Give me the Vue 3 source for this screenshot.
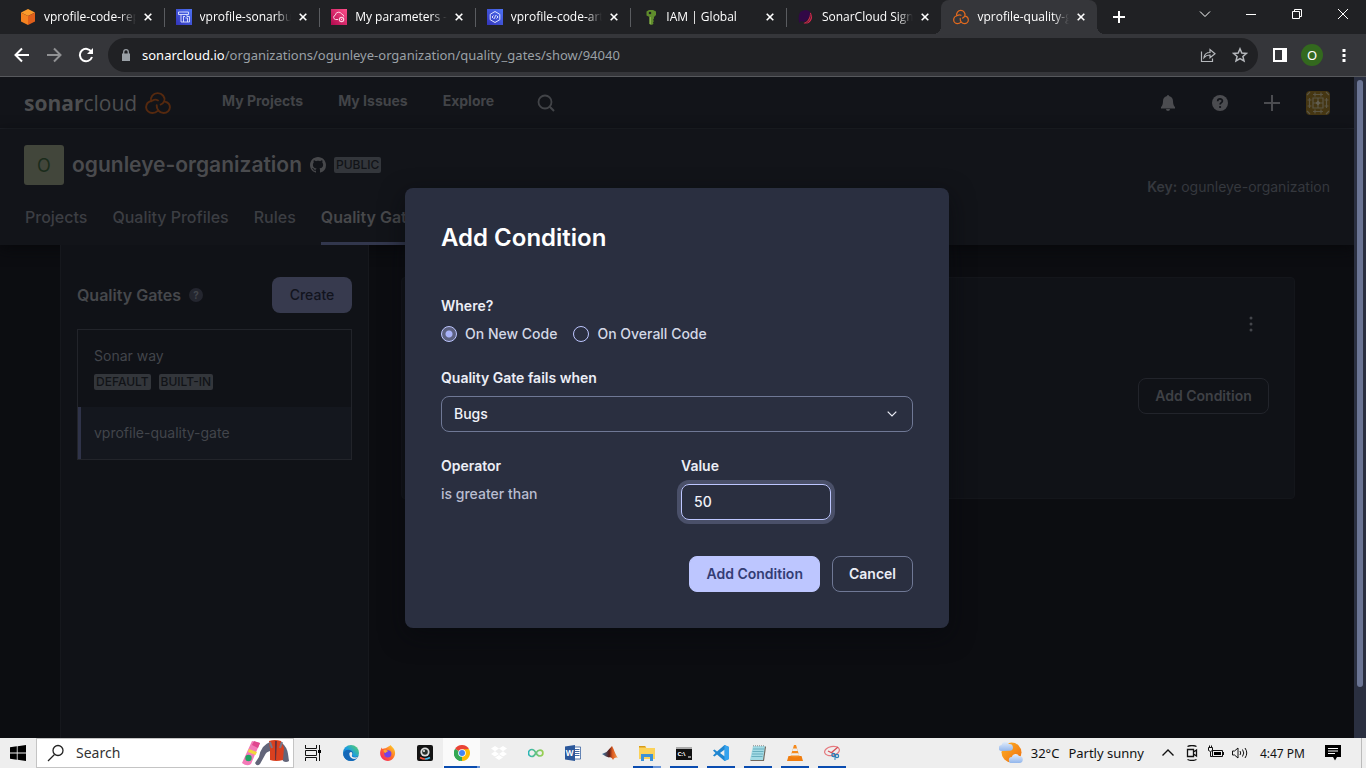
<script setup>
import { ref } from 'vue'

const tabs = [
  { title: 'vprofile-code-repo', icon: 'cube' },
  { title: 'vprofile-sonarbuild', icon: 'build' },
  { title: 'My parameters - AWS', icon: 'params' },
  { title: 'vprofile-code-artifact', icon: 'hexcode' },
  { title: 'IAM | Global', icon: 'key' },
  { title: 'SonarCloud Sign up', icon: 'planet' },
  { title: 'vprofile-quality-gate', icon: 'sonar', active: true }
]

const apps = [
  { name: 'Edge', icon: 'edge' },
  { name: 'Firefox', icon: 'firefox' },
  { name: 'Camera', icon: 'camera' },
  { name: 'Chrome', icon: 'chrome', open: true, current: true },
  { name: 'Dropbox', icon: 'dropbox' },
  { name: 'Loop', icon: 'loop' },
  { name: 'Word', icon: 'word', glyph: 'W' },
  { name: 'Matlab', icon: 'matlab' },
  { name: 'Explorer', icon: 'folder', open: true, stacked: true },
  { name: 'Command Prompt', icon: 'cmd', glyph: 'C:\\', open: true },
  { name: 'Code', icon: 'code', open: true },
  { name: 'Notepad', icon: 'notepad', open: true },
  { name: 'VLC', icon: 'vlc', open: true },
  { name: 'Snip', icon: 'snip', open: true }
]

const scope = ref('new')
const metric = ref('Bugs')
const value = ref('50')
</script>

<template>
  <div class="screen">
    <svg class="sprite" aria-hidden="true">
      <defs>
        <linearGradient id="gBlue" x1="0" y1="1" x2="1" y2="0"><stop offset="0" stop-color="#3334b9" /><stop offset="1" stop-color="#4d72f3" /></linearGradient>
        <linearGradient id="gPink" x1="0" y1="1" x2="1" y2="0"><stop offset="0" stop-color="#b0084d" /><stop offset="1" stop-color="#ff4f8b" /></linearGradient>
        <linearGradient id="gEdge" x1="0" y1="1" x2="1" y2="0"><stop offset="0" stop-color="#0c59a4" /><stop offset=".5" stop-color="#1b9de2" /><stop offset="1" stop-color="#5fd65c" /></linearGradient>
        <linearGradient id="gFox" x1="0" y1="1" x2="1" y2="0"><stop offset="0" stop-color="#f5156c" /><stop offset=".5" stop-color="#ff6a2b" /><stop offset="1" stop-color="#ffe226" /></linearGradient>
        <linearGradient id="gLoop" x1="0" y1="0" x2="1" y2="0"><stop offset="0" stop-color="#2ab5b5" /><stop offset="1" stop-color="#9bcf50" /></linearGradient>
        <linearGradient id="gMat" x1="0" y1="0" x2="1" y2="0"><stop offset="0" stop-color="#3a80b0" /><stop offset=".45" stop-color="#5b1d18" /><stop offset=".65" stop-color="#dc5a20" /><stop offset="1" stop-color="#f0a050" /></linearGradient>
        <linearGradient id="gSun" x1="0" y1="0" x2="1" y2="1"><stop offset="0" stop-color="#ffb224" /><stop offset="1" stop-color="#ee6d10" /></linearGradient>
        <linearGradient id="gCloud" x1="0" y1="0" x2="0" y2="1"><stop offset="0" stop-color="#e2edfb" /><stop offset="1" stop-color="#92b6ec" /></linearGradient>
      </defs>
      <symbol id="cube" viewBox="0 0 16 16"><path d="M8 0l7 3.400L8 7 1 3.400z" fill="#fb9b2c" /><path d="M1 3.400L8 7v9l-7-3.600z" fill="#f58220" /><path d="M15 3.400L8 7v9l7-3.600z" fill="#e05f1b" /></symbol>
      <symbol id="build" viewBox="0 0 16 16"><path d="M0 0h16v16H0z" fill="url(#gBlue)" /><path d="M2.500 3h10v2.500h-10zM5 5.500V13h8.500V7.500H11V5.500M7 7.500h2M7.500 8v5M9.500 9h2v4" fill="none" stroke="#dfe4ff" stroke-width=".9" /></symbol>
      <symbol id="params" viewBox="0 0 16 16"><path d="M0 0h16v16H0z" fill="url(#gPink)" /><path d="M7 10.500H4.500a2.200 2.200 0 0 1-.2-4.300 3.400 3.400 0 0 1 6.500-1 2.400 2.400 0 0 1 2 2.300" fill="none" stroke="#ffd0e2" stroke-width="1" /><circle cx="10.500" cy="10.500" r="2.200" fill="none" stroke="#ffd0e2" stroke-width="1.200" /><circle cx="10.500" cy="10.500" r=".7" fill="#ffd0e2" /></symbol>
      <symbol id="hexcode" viewBox="0 0 16 16"><path d="M0 0h16v16H0z" fill="url(#gBlue)" /><path d="M8 2.500l4.800 2.800v5.400L8 13.500l-4.800-2.800V5.300zM6.500 6.500L5 8l1.500 1.500M9.500 6.500L11 8 9.500 9.500M8.600 6.300l-1.200 3.400" fill="none" stroke="#dfe4ff" stroke-width="1" /></symbol>
      <symbol id="key" viewBox="0 0 16 16"><path d="M4.500 2.500L7 1h4l3 1.500V6l-2 2v1.500L11 11l1 1-1 1.200.5 1.300L10 16l-2.500-1V8L4.500 6.500z" fill="#5f8c2c" /><path d="M7.500 8V15L9 15.600V8z" fill="#87b04a" /><circle cx="8" cy="4" r="1.300" fill="#202124" /></symbol>
      <symbol id="planet" viewBox="0 0 16 16"><path d="M7 1a6.500 6.500 0 0 1 5 2c1 2-1 7-5 9.500a5 5 0 0 1-4-.5L1.500 14C0 11 .5 4 3 2.500z" fill="#310846" /><path d="M12 3.500c3.500 2.500 2.500 8-1.500 10.500-2 1-4 1-5 0 4-.8 6.800-5.500 6.500-10.500z" fill="#d9284f" /><path d="M13 5c.3 4-2 8-5.500 9.500" fill="none" stroke="#202124" stroke-width=".7" /></symbol>
      <symbol id="sonar" viewBox="0 0 24 24"><path d="M5.700 10.300A6.300 6.300 0 1 1 17.800 10.200C17 12 15.800 13.200 14.400 13.600M12 9.400C10.600 8.500 8.300 8.600 6.800 9.700 4 10.300 1 11.800 1 16.300A5.900 5.900 0 0 0 7 22c2 0 3.400-.7 4.400-1.800M10.800 14.200c-.2 4 2.400 7.800 6.400 7.800a5.800 5.800 0 0 0 5.800-5.700c0-3-2-5.100-4.700-5.700" fill="none" stroke="currentColor" stroke-width="1.800" stroke-linecap="round" /></symbol>
      <symbol id="edge" viewBox="0 0 16 16"><circle cx="8" cy="8" r="8" fill="url(#gEdge)" /><path d="M.3 9.500C1 5 5 4 8 5.500c2 1 2.500 3 1.300 4.500-.6 1 .7 2 3 2 1.500 0 2.500-.8 3.200-1.500C14.500 14 11 16 8 16 4 15.800 1 13.500.3 9.500z" fill="#1468b8" /><path d="M6.300 9C6.500 12.500 9 14.500 12.500 13.800c1.200-.4 2-1.200 2.800-2.300-1 .7-2 .9-3 .9-3 0-4-1-3.200-2.600.6-1.200 0-2.800-1.100-2.900C6.800 7 6.300 8 6.300 9z" fill="#eee" /></symbol>
      <symbol id="firefox" viewBox="0 0 16 16"><path d="M8.500 1.500C10 .8 10.500 0 10.500 0c1 1.500 2.500 2.500 3.500 4 3 5-.5 12-6 12C2 16-1 10.500.5 5.500c.3-1 1-2.500 1.300-3l.6 1.500c2-.8 4-.5 6.100-2.500z" fill="url(#gFox)" /><circle cx="7.800" cy="8.800" r="3.600" fill="#7542e5" /><path d="M3.500 5c2-.5 3.500 0 4.500 1.500-1.500 0-2 1-2 1.500C4.500 8 3.500 7 3.500 5z" fill="#ffa52b" /></symbol>
      <symbol id="camera" viewBox="0 0 16 16"><rect width="16" height="16" rx="2" fill="#131313" /><circle cx="8" cy="7" r="4.600" fill="#ddd" /><circle cx="8" cy="7" r="2.800" fill="#28312d" /><circle cx="7" cy="6" r="1" fill="#eee" /><path d="M3 12.500q2.500 1.500 5 1.500" stroke="#f0533c" stroke-width="1.500" fill="none" /><path d="M8 14q2.500 0 5-1.500" stroke="#45b8e8" stroke-width="1.500" fill="none" /></symbol>
      <symbol id="chrome" viewBox="0 0 16 16"><path d="M8 8L1.070 4A8 8 0 0 1 14.930 4z" fill="#ea4335" /><path d="M8 8l6.930-4A8 8 0 0 1 8 16z" fill="#fbbc05" /><path d="M8 8v8A8 8 0 0 1 1.070 4z" fill="#34a853" /><path d="M8 4.300h7L8 16l3.200-6z" fill="#fbbc05" /><path d="M1.100 4l3.700 6L8 12l-2 4A8 8 0 0 1 1.100 4z" fill="#34a853" /><circle cx="8" cy="8" r="3.800" fill="#fff" /><circle cx="8" cy="8" r="3" fill="#4285f4" /></symbol>
      <symbol id="dropbox" viewBox="0 0 16 16"><path d="M4 1l4 2.600L4 6.200 0 3.600zM12 1l4 2.600-4 2.600-4-2.600zM4 6.300l4 2.600-4 2.600L0 8.900zM12 6.300l4 2.600-4 2.600-4-2.600zM8 9.900l4 2.600L8 15l-4-2.500z" fill="#fff" /></symbol>
      <symbol id="loop" viewBox="0 0 16 16"><path d="M8 8C6.500 10.500 5.500 11.500 4 11.500a3.400 3.400 0 0 1 0-7C6 4.500 7 6 8 8s2 3 4 3a2.800 2.800 0 0 0 0-5.800C10 5.200 9 6.500 8 8z" fill="none" stroke="url(#gLoop)" stroke-width="1.700" /></symbol>
      <symbol id="word" viewBox="0 0 16 16"><path d="M9 2h6.600v12H9z" fill="#fff" stroke="#2b579a" stroke-width=".8" /><path d="M10 4.500h4.500M10 6.500h4.500M10 8.500h4.500M10 10.500h4.500" stroke="#2b579a" stroke-width=".9" /><path d="M0 1.500L10 0v16L0 14.500z" fill="#2b579a" /></symbol>
      <symbol id="matlab" viewBox="0 0 16 16"><path d="M0 9l4.500-2L10 1c1.500 2 3 8 6 12-2-.8-3.500-.5-5 2-1-2-2-3-4-2.500L4 11.500z" fill="url(#gMat)" /></symbol>
      <symbol id="folder" viewBox="0 0 16 16"><path d="M0 1h6l1.500 2H16v11H0z" fill="#fbd25a" /><path d="M0 1h6l1 1.500H0z" fill="#d89b18" /><path d="M2 16V9h12v7h-3v-4H5v4z" fill="#3c92d8" /></symbol>
      <symbol id="cmd" viewBox="0 0 16 16"><path d="M0 2h16v13H0z" fill="#111" /><path d="M0 2h16v2H0z" fill="#aaa" /><path d="M12 12h3" stroke="#fff" /></symbol>
      <symbol id="code" viewBox="0 0 16 16"><path d="M11.500 0L16 2v12l-4.500 2L4 9.500 1.500 11.500 0 10.500 2.500 8 0 5.500l1.500-1L4 6.500zM11.700 4.500L7 8l4.700 3.500z" fill="#1f86d0" fill-rule="evenodd" /><path d="M11.500 0L16 2v12l-4.500 2z" fill="#36a3ee" /></symbol>
      <symbol id="notepad" viewBox="0 0 16 16"><path d="M15 1l1 1-2 14H1l-1-1z" fill="#71695f" /><path d="M3 1h12l-2 14H0z" fill="#a3dbe5" /><path d="M3 4h11M2.500 6.500h11M2 9h11M1.500 11.500h11" stroke="#4f9caf" stroke-width=".7" /><path d="M3 .8h12" stroke="#888" stroke-dasharray="1 1" /></symbol>
      <symbol id="vlc" viewBox="0 0 16 16"><path d="M1.500 11h13L16 16H0z" fill="#f07d0f" /><path d="M7 0h2l3.500 11.500q-4.500 2-9 0z" fill="#f58a1d" /><path d="M6 3.500h4l.8 2.500H5.200zM4.500 8.200h7l.7 2.300H3.700z" fill="#eee" /></symbol>
      <symbol id="snip" viewBox="0 0 16 16"><ellipse cx="8" cy="6" rx="7.500" ry="4.500" fill="none" stroke="#e67a7f" stroke-width="1.200" transform="rotate(-12 8 6)" /><path d="M14 2L7 8M4 6l8 4" stroke="#d74e55" stroke-width="1.300" /><circle cx="9.500" cy="10" r="1.600" fill="none" stroke="#2c7fb8" stroke-width="1.300" /><circle cx="13" cy="11" r="1.600" fill="none" stroke="#2c7fb8" stroke-width="1.300" /><path d="M11 10v5" stroke="#2c7fb8" /></symbol>
    </svg>

    <header class="titlebar">
      <div class="tabs">
        <div v-for="t in tabs" :key="t.title" class="tab" :class="{ active: t.active }">
          <svg class="fav"><use :href="'#' + t.icon" /></svg>
          <span class="tab-title">{{ t.title }}</span>
          <button class="x" aria-label="Close tab"><svg viewBox="0 0 8 8"><path d="M.7.7l6.600 6.600M7.300.7L.7 7.300" /></svg></button>
        </div>
      </div>
      <button class="newtab" aria-label="New tab"><svg width="12" height="12" viewBox="0 0 12 12"><path d="M6 0v12M0 6h12" stroke="#fff" stroke-width="2" /></svg></button>
      <div class="winctl">
        <button aria-label="Search tabs"><svg width="12" height="12" viewBox="0 0 12 12"><path d="M1 3.500l5 5 5-5" /></svg></button>
        <button aria-label="Minimize"><svg width="12" height="12" viewBox="0 0 12 12"><path d="M1 6.500h10" /></svg></button>
        <button aria-label="Restore"><svg width="12" height="12" viewBox="0 0 12 12"><path d="M1.500 3.500h7v7h-7zM3.500 3.500v-2h7v7h-2" /></svg></button>
        <button aria-label="Close"><svg width="12" height="12" viewBox="0 0 12 12"><path d="M1 1l10 10M11 1L1 11" /></svg></button>
      </div>
    </header>

    <div class="toolbar">
      <button class="nav-btn" aria-label="Back"><svg width="16" height="16" viewBox="0 0 16 16"><path d="M15 8H2M8 1.500L1.500 8 8 14.500" /></svg></button>
      <button class="nav-btn off" aria-label="Forward"><svg width="16" height="16" viewBox="0 0 16 16"><path d="M1 8h13M8 1.500L14.500 8 8 14.500" /></svg></button>
      <button class="nav-btn" aria-label="Reload"><svg width="16" height="16" viewBox="0 0 16 16"><path d="M13.500 5A6.200 6.200 0 1 0 14 10" /><path d="M15 1v6H9z" fill="#fff" stroke="none" /></svg></button>
      <div class="omnibox">
        <svg width="10" height="12" viewBox="0 0 10 12"><path d="M1 4.500h8V12H1z" fill="#9aa0a6" /><path d="M2.700 5V3a2.300 2.300 0 0 1 4.600 0v2" fill="none" stroke="#9aa0a6" stroke-width="1.300" /></svg>
        <span class="url"><b>sonarcloud.io</b>/organizations/ogunleye-organization/quality_gates/show/94040</span>
        <button class="om" aria-label="Share"><svg width="16" height="16" viewBox="0 0 16 16"><path d="M1.500 4.500v10h11v-3M4 10.500C4.500 7 7 5.500 10 5.500V2.500l5 4.300-5 4V8C7 8 5.500 8.800 4 10.500z" /></svg></button>
        <button class="om" aria-label="Bookmark"><svg width="16" height="16" viewBox="0 0 16 16"><path d="M8 1.800l1.800 4.200 4.600.4-3.500 3 1.100 4.500L8 11.500l-4 2.400 1.100-4.500-3.500-3 4.600-.4z" stroke-width="1.500" /></svg></button>
      </div>
      <button class="ext" aria-label="Side panel"><svg width="14" height="14" viewBox="0 0 14 14"><path d="M0 0h14v14H0zM2 2v10h7V2z" fill="#fff" fill-rule="evenodd" /></svg></button>
      <button class="profile" aria-label="Profile">O</button>
      <button class="ext" aria-label="Menu"><svg width="4" height="14" viewBox="0 0 4 14"><path d="M.5 1h3v3h-3zM.5 6h3v3h-3zM.5 11h3v3h-3z" fill="#fff" /></svg></button>
    </div>

    <div class="view">
      <div class="page">
        <div class="topnav">
          <a class="logo" href="#"><span><b>sonar</b>cloud</span><svg width="26" height="24" viewBox="0 0 24 24" preserveAspectRatio="none"><use href="#sonar" /></svg></a>
          <nav class="main-links">
            <a href="#">My Projects</a>
            <a href="#">My Issues</a>
            <a href="#">Explore</a>
          </nav>
          <button class="find" aria-label="Search"><svg width="18" height="18" viewBox="0 0 18 18"><path d="M12.800 12.800L17 17" stroke-width="2" /><circle cx="8" cy="8" r="6.500" stroke-width="1.800" /></svg></button>
          <div class="tools">
            <button aria-label="Notifications"><svg width="16" height="16" viewBox="0 0 16 16"><path d="M8 0a1 1 0 0 1 1 1c2.500.5 4 2.500 4 5 0 3.500 1 5 2 6v1.500H1V12c1-1 2-2.500 2-6 0-2.500 1.500-4.500 4-5a1 1 0 0 1 1-1zM6 14h4a2 2 0 0 1-4 0z" fill="currentColor" /></svg></button>
            <button aria-label="Help"><svg width="16" height="16" viewBox="0 0 16 16"><circle cx="8" cy="8" r="8" fill="currentColor" /><path d="M5.700 6.200C5.700 3.200 10.400 3.300 10.400 6c0 1.700-2.300 1.700-2.300 3.600" fill="none" stroke="#121419" stroke-width="1.700" /><circle cx="8.100" cy="12" r="1.100" fill="#121419" /></svg></button>
            <button aria-label="Create new"><svg width="16" height="16" viewBox="0 0 16 16"><path d="M8 0v16M0 8h16" stroke="currentColor" stroke-width="2" /></svg></button>
            <button aria-label="Account"><svg width="24" height="24" viewBox="0 0 24 24"><rect width="24" height="24" rx="4" fill="#453612" /><path d="M1 4l3-3M20 1l3 3M1 20l3 3M20 23l3-3M7 3.500h10M7 20.500h10M3.500 7v10M20.500 7v10M7 7h10v10H7zM7 12h10M12 7v10M9 1.500v4M15 1.500v4M9 18.500v4M15 18.500v4M1.500 9h4M1.500 15h4M18.500 9h4M18.500 15h4" fill="none" stroke="#5b5645" stroke-width="1.200" /><path d="M12 9.500l2.500 2.500-2.500 2.500L9.500 12z" fill="#625e50" /></svg></button>
          </div>
        </div>

        <div class="orghead">
          <div>
            <div class="orgline">
              <span class="avatar">O</span>
              <h1>ogunleye-organization</h1>
              <svg class="gh" width="16" height="16" viewBox="0 0 16 16"><path fill="currentColor" d="M8 0C3.580 0 0 3.580 0 8c0 3.540 2.290 6.530 5.470 7.590.4.070.55-.17.55-.38 0-.19-.01-.82-.01-1.490-2.010.37-2.530-.49-2.690-.94-.09-.23-.48-.94-.82-1.130-.28-.15-.68-.52-.01-.53.63-.01 1.080.58 1.230.82.72 1.210 1.870.87 2.330.66.07-.52.28-.87.51-1.070-1.780-.2-3.640-.89-3.640-3.950 0-.87.31-1.590.82-2.150-.08-.2-.36-1.020.08-2.120 0 0 .67-.21 2.200.82.64-.18 1.320-.27 2-.27s1.360.09 2 .27c1.530-1.040 2.200-.82 2.200-.82.44 1.100.16 1.920.08 2.120.51.56.82 1.270.82 2.150 0 3.070-1.870 3.750-3.650 3.950.29.25.54.73.54 1.480 0 1.070-.01 1.930-.01 2.200 0 .21.15.46.55.38A8.010 8.010 0 0 0 16 8c0-4.420-3.580-8-8-8z" /></svg>
              <span class="badge">PUBLIC</span>
            </div>
            <nav class="orgtabs">
              <a href="#">Projects</a>
              <a href="#">Quality Profiles</a>
              <a href="#">Rules</a>
              <a href="#" class="on">Quality Gates</a>
            </nav>
          </div>
          <p class="orgkey"><b>Key:</b> ogunleye-organization</p>
        </div>

        <div class="body">
          <aside class="side">
            <div class="side-head">
              <h2>Quality Gates</h2>
              <span class="q">?</span>
              <button class="create">Create</button>
            </div>
            <ul class="gates">
              <li><a href="#">Sonar way</a>
                <div class="marks"><span class="badge">DEFAULT</span><span class="badge">BUILT-IN</span></div>
              </li>
              <li class="sel"><a href="#">vprofile-quality-gate</a></li>
            </ul>
          </aside>
          <main class="content">
            <section class="card">
              <button class="kebab" aria-label="More actions"><svg width="4" height="18" viewBox="0 0 4 18"><circle cx="2" cy="3" r="1.500" /><circle cx="2" cy="9" r="1.500" /><circle cx="2" cy="15" r="1.500" /></svg></button>
              <button class="ghost">Add Condition</button>
            </section>
          </main>
        </div>

        <div class="overlay">
          <form class="modal" role="dialog" aria-labelledby="dlg-title" @submit.prevent>
            <h2 id="dlg-title">Add Condition</h2>
            <fieldset>
              <legend>Where?</legend>
              <div class="radios">
                <label><input v-model="scope" type="radio" name="scope" value="new" />On New Code</label>
                <label><input v-model="scope" type="radio" name="scope" value="overall" />On Overall Code</label>
              </div>
            </fieldset>
            <label class="lbl" for="metric">Quality Gate fails when</label>
            <div class="select">
              <select id="metric" v-model="metric"><option>Bugs</option><option>Coverage</option></select>
              <svg width="10" height="6" viewBox="0 0 10 6"><path d="M.7.7L5 5 9.300.7" fill="none" stroke="#eceef6" stroke-width="1.200" /></svg>
            </div>
            <div class="cols">
              <div><span class="lbl">Operator</span><p>is greater than</p></div>
              <div><label class="lbl" for="val">Value</label><input id="val" v-model="value" class="val" type="text" /></div>
            </div>
            <div class="actions">
              <button class="primary" type="submit">Add Condition</button>
              <button class="cancel" type="button">Cancel</button>
            </div>
          </form>
        </div>
      </div>
      <div class="scroll"><span></span></div>
    </div>

    <footer class="taskbar">
      <button class="start" aria-label="Start"><svg width="16" height="16" viewBox="0 0 16 16"><path d="M0 2.300l6.800-1v6.300H0zM7.600 1.200L16 0v7.600H7.600zM0 8.400h6.800v6.300l-6.800-1zM7.600 8.400H16V16l-8.400-1.200z" /></svg></button>
      <label class="search">
        <svg width="18" height="18" viewBox="0 0 18 18"><circle cx="11" cy="6.500" r="5" /><path d="M7.500 10.500L1 17" /></svg>
        <input type="text" placeholder="Search" />
        <svg class="art" width="48" height="26" viewBox="0 0 48 26"><path d="M11 1l8 2-9 21q-4 3-9-1z" fill="#f27ab8" /><path d="M13 1l6 2-2 5-6-3z" fill="#e0468f" /><path d="M8 9l8 3-1.500 3L7 12z" fill="#f0d93c" /><circle cx="7.500" cy="18" r="3.200" fill="#20a464" /><path d="M22 7q4-4 7-5v9q-4 1-5 4l-5 9q-3 3-5-1l4-6q1-6 4-10z" fill="#626579" /><path d="M41 3q5 4 6 11l1 7q-3 2-6 0l-2-8z" fill="#626579" /><path d="M28 1q6-2 12 0l3 7-1 12q-7 2-13 0V9z" fill="#d9401f" /><path d="M34 1h2l-1 19h-1z" fill="#69303a" /><path d="M29 2l2 6M41 2l-2 6" stroke="#77798c" stroke-width="2" /></svg>
      </label>
      <button class="tview" aria-label="Task view"><svg width="16" height="16" viewBox="0 0 16 16"><path d="M.5 0v3.500h11V0M.5 16v-3.500h11V16M.5 5.500h11v5H.5zM14.500 0v16" /><path d="M13 5h3v3h-3z" fill="#000" stroke="none" /></svg></button>
      <button v-for="a in apps" :key="a.name" class="app" :class="[a.icon, { open: a.open, current: a.current, stacked: a.stacked }]" :aria-label="a.name">
        <svg width="16" height="16"><use :href="'#' + a.icon" /></svg>
        <span v-if="a.glyph" class="glyph">{{ a.glyph }}</span>
      </button>
      <div class="tray">
        <svg class="weather" width="24" height="24" viewBox="0 0 24 24"><circle cx="12.500" cy="11.500" r="10" fill="url(#gSun)" /><path d="M3 10a3 3 0 0 1-.5-6A4 4 0 0 1 10 3a3.300 3.300 0 0 1 1 6.800z" fill="url(#gCloud)" /><path d="M13 22a3 3 0 0 1-.3-6 4 4 0 0 1 7.300-1 3.500 3.500 0 0 1 .5 7z" fill="url(#gCloud)" /></svg>
        <span class="deg">32°C</span>
        <span class="cond">Partly sunny</span>
        <svg class="ti" viewBox="0 0 16 16"><path d="M2.500 10.500L8 5l5.500 5.500" stroke-width="1.400" /></svg>
        <svg class="ti" viewBox="0 0 16 16"><path d="M3.500 4.500h6v7h-6zM9.500 7l3-2v6l-3-2M3.500 1.500Q8-.5 12.500 1.500M3.500 14.500q4.500 2 9 0" stroke-width="1.300" /></svg>
        <svg class="ti" viewBox="0 0 16 16"><path d="M4.500 5.500h10v6h-10zM15.500 7v3M.500 2.500v3q2 2 4 0v-3zM1.500.5v2M3.500.5v2M2.500 7v4.500h2" /><path d="M6 7h7v3H6z" fill="#000" stroke="none" /></svg>
        <svg class="ti" viewBox="0 0 16 16"><path d="M.5 6h2L6 3v10l-3.500-3h-2zM8 6q1.500 2 0 4M10.500 4.500q2.500 3.500 0 7M13 3q3.500 5 0 10" /></svg>
        <time>4:47 PM</time>
        <svg class="note" width="16" height="16" viewBox="0 0 16 16"><path d="M0 0h16v12h-4l-2 3.500L8 12H0z" /><path d="M3 3.500h10M3 6h10M3 8.500h7" stroke="#fff" /></svg>
      </div>
    </footer>
  </div>
</template>

<style>
body { background: #0b0c10; }
</style>

<style scoped>
* { box-sizing: border-box; }
button { font: inherit; color: inherit; background: none; border: 0; padding: 0; margin: 0; display: inline-flex; align-items: center; justify-content: center; }
a { color: inherit; text-decoration: none; }
h1, h2, p, ul, fieldset { margin: 0; padding: 0; border: 0; }
svg { display: block; flex: none; }
.sprite { position: absolute; width: 0; height: 0; }
.screen { display: flex; flex-direction: column; height: 100vh; overflow: hidden; font-family: "Noto Sans", "Open Sans", sans-serif; font-size: 13px; }

.titlebar { display: flex; height: 34px; background: #202124; color: #fff; }
.tabs { flex: 0 1 1097px; min-width: 0; display: flex; padding-left: 8px; }
.tab { position: relative; flex: 1 1 0; min-width: 0; display: flex; align-items: center; padding: 0 12px; font-family: "Open Sans", "Noto Sans", sans-serif; font-size: 12px; }
.tab:not(.active):not(:nth-child(6))::after { content: ""; position: absolute; right: -1px; top: 8px; width: 1px; height: 19px; background: #5a5c60; }
.tab.active { background: #35363a; border-radius: 8px 8px 0 0; }
.tab.active::before, .tab.active::after { content: ""; position: absolute; bottom: 0; width: 8px; height: 8px; }
.tab.active::before { left: -8px; background: radial-gradient(circle at 0 0, #202124 8px, #35363a 8px); }
.tab.active::after { right: -8px; background: radial-gradient(circle at 100% 0, #202124 8px, #35363a 8px); }
.fav { width: 16px; height: 16px; margin-right: 8px; color: #e36a1e; }
.tab-title { flex: 1; min-width: 0; overflow: hidden; white-space: nowrap; line-height: 20px; -webkit-mask-image: linear-gradient(to right, #000 calc(100% - 16px), transparent); mask-image: linear-gradient(to right, #000 calc(100% - 16px), transparent); }
.x { width: 8px; height: 8px; margin: 0 0 0 8px; flex: none; }
.x svg { width: 8px; height: 8px; stroke: #fff; stroke-width: 1.600; }
.newtab { width: 44px; }
.winctl { margin-left: auto; display: flex; }
.winctl button { width: 46px; height: 28px; }
.winctl svg { fill: none; stroke: #fff; stroke-width: 1; }

.toolbar { display: flex; align-items: center; height: 43px; padding: 0 11px 0 6px; background: #35363a; border-bottom: 1px solid #57595d; }
.nav-btn { width: 32px; height: 32px; }
.nav-btn svg { fill: none; stroke: #fff; stroke-width: 2; }
.nav-btn.off { opacity: .45; }
.omnibox { flex: 1; min-width: 0; display: flex; align-items: center; height: 34px; margin: 0 11px 0 6px; padding: 0 10px 0 13px; border-radius: 17px; background: #202124; }
.url { flex: 1; min-width: 0; overflow: hidden; white-space: nowrap; margin-left: 11px; color: #9aa0a6; font-size: 13px; line-height: 20px; }
.url b { font-weight: 400; color: #fff; }
.om { width: 16px; margin-left: 16px; }
.om svg { fill: none; stroke: #b5b8bc; stroke-width: 1.200; }
.ext { width: 22px; }
.profile { width: 22px; height: 22px; border-radius: 50%; margin: 0 10px; background: #33691e; color: #fff; }

.view { flex: 1; min-height: 0; display: flex; background: #0c0d11; }
.page { position: relative; flex: 1; min-width: 0; display: flex; flex-direction: column; overflow: hidden; font-family: Inter, "Liberation Sans", sans-serif; font-size: 14px; color: #42454b; }
.page button { line-height: 20px; }
.topnav { display: flex; align-items: center; height: 52px; flex: none; padding: 0 24px; background: #121419; border-bottom: 1px solid #1d2026; color: #424448; }
.logo { display: flex; align-items: center; gap: 8px; font: 400 21px/24px "Open Sans", sans-serif; color: #4d4e50; width: 198px; }
.logo b { font-weight: 700; }
.logo svg { color: #55290f; }
.main-links { display: flex; gap: 35px; font-weight: 700; line-height: 20px; padding-bottom: 4px; }
.find { margin-left: 43px; }
.find svg { fill: none; stroke: currentColor; }
.tools { margin-left: auto; display: flex; align-items: center; gap: 36px; color: #4b4c50; }
.tools button:last-child { margin-left: -10px; }
.orghead { display: flex; justify-content: space-between; align-items: center; height: 116px; flex: none; padding: 0 24px; background: #121419; box-shadow: 0 4px 12px #08090c; }
.orghead > div { align-self: stretch; display: flex; flex-direction: column; justify-content: space-between; padding-top: 16px; }
.orgline { display: flex; align-items: center; }
.avatar { width: 40px; height: 40px; border-radius: 3px; background: #42463b; color: #1b2c1b; display: grid; place-items: center; font-size: 18px; margin-right: 8px; }
h1 { font-size: 21px; line-height: 28px; font-weight: 600; color: #4a4b4e; }
.gh { margin: 0 8px; color: #47484b; }
.badge { background: #33363b; color: #111317; border-radius: 2px; font-size: 12px; line-height: 16px; padding: 0 2px; font-weight: 500; }
.orgtabs { display: flex; gap: 25px; font-size: 16px; font-weight: 500; line-height: 24px; color: #3c3e43; padding-left: 1px; }
.orgtabs a { padding: 0 0 13px; border-bottom: 3px solid transparent; }
.orgtabs .on { font-weight: 600; color: #47484b; border-color: #32374d; }
.orgkey { color: #35383e; line-height: 20px; }
.orgkey b { font-weight: 600; }

.body { flex: 1; display: flex; padding-left: 60px; }
.side { width: 309px; flex: none; background: #101217; border: solid #16181d; border-width: 0 1px; padding: 32px 16px 0; }
.side-head { display: flex; align-items: center; margin-bottom: 16px; }
.side-head h2 { font-size: 16px; line-height: 24px; font-weight: 600; color: #46484c; }
.q { width: 14px; height: 14px; border-radius: 50%; background: #24262f; font-size: 10px; font-weight: 700; display: grid; place-items: center; margin-left: 8px; }
.create { margin-left: auto; width: 80px; height: 36px; border-radius: 8px; background: #373a4e; color: #12141e; font-weight: 500; }
.gates { list-style: none; border: 1px solid #22242a; line-height: 20px; }
.gates li { padding: 16px 16px; }
.gates li:first-child { height: 77px; }
.marks { display: flex; gap: 8px; margin-top: 8px; }
.gates .sel { background: #14171e; border-left: 3px solid #2f3349; padding-left: 13px; }
.content { flex: 1; min-width: 0; padding: 32px 59px 0 32px; }
.card { height: 222px; background: #101217; border: 1px solid #14161b; border-radius: 4px; padding: 32px 25px; display: flex; flex-direction: column; align-items: flex-end; }
.kebab { width: 36px; height: 28px; fill: #44464b; }
.ghost { width: 131px; height: 36px; margin-top: 40px; border: 1px solid #22242b; border-radius: 8px; font-weight: 600; color: #3f4146; }

.overlay { position: absolute; inset: 0; display: grid; place-items: center; }
.modal { width: 544px; max-width: 90%; padding: 36px; border-radius: 8px; background: #2a2f40; color: #d4d8e6; box-shadow: 0 8px 24px rgba(6, 8, 14, .6); line-height: 20px; }
.modal h2 { font-size: 24px; line-height: 28px; font-weight: 600; color: #fff; margin-bottom: 44px; }
legend, .lbl { display: block; padding: 0; margin-bottom: 8px; font-weight: 600; color: #eceef6; }
.radios { display: flex; gap: 16px; margin-bottom: 24px; }
.radios label { display: flex; align-items: center; gap: 8px; font-weight: 500; }
.radios input { appearance: none; width: 16px; height: 16px; margin: 0; border: 1px solid #bdc6ff; border-radius: 50%; }
.radios input:checked { background: radial-gradient(circle, #a8b2f8 3px, #5c6180 4px); }
.select { position: relative; }
select { appearance: none; width: 100%; height: 36px; padding: 0 12px; border: 1px solid #6f7895; border-radius: 8px; background: transparent; font: 500 14px/20px Inter, sans-serif; color: #f2f3fa; }
option { color: #111; }
.select svg { position: absolute; right: 16px; top: 15px; pointer-events: none; }
.cols { display: grid; grid-template-columns: 1fr 1fr; column-gap: 8px; margin: 24px 0 36px; }
.cols p { color: #b9bdd0; font-weight: 500; }
.val { display: block; width: 150px; height: 36px; padding: 0 12px; border: 1px solid #bdc6ff; border-radius: 8px; background: transparent; font: 500 14px/20px Inter, sans-serif; color: #f2f3fa; outline: 0; box-shadow: 0 0 0 4px #4a5069; }
.actions { display: flex; justify-content: flex-end; gap: 12px; }
.actions button { height: 36px; padding: 0 16px; border-radius: 8px; font-weight: 600; border: 1px solid #6f7895; color: #eceef6; }
.actions .primary { background: #bdc6ff; border-color: #bdc6ff; color: #343d75; }

.scroll { width: 12px; background: #2a2f40; padding: 3px 3px 51px; flex: none; }
.scroll span { display: block; height: 100%; border-radius: 3px; background: #6b7594; }

.taskbar { display: flex; align-items: stretch; height: 30px; background: #eee; color: #111; }
.start { width: 36px; }
.search { width: 258px; display: flex; align-items: center; background: #fff; border: 1px solid #c4c4c4; padding-left: 10px; padding-right: 4px; }
.search > svg:first-child { fill: none; stroke: #222; stroke-width: 1.300; }
.search input { flex: 1; min-width: 0; border: 0; outline: 0; padding: 0; margin-left: 11px; background: transparent; font: 14px/20px "Noto Sans", sans-serif; }
.search input::placeholder { color: #333; opacity: 1; }
.tview { width: 38px; }
.tview svg { fill: none; stroke: #111; stroke-width: 1; }
.app { position: relative; width: 37px; }
.app.open::after { content: ""; position: absolute; left: 5px; right: 4px; bottom: 0; height: 2px; background: #0a4cb0; }
.app.stacked::after { background: linear-gradient(to right, #0a4cb0 20px, #6a95d8 20px); }
.app.current { background: #fafafa; }
.app.current::after { left: 1px; right: 0; background: linear-gradient(to right, #0a4cb0 33px, #6a95d8 33px); }
.glyph { position: absolute; left: 10px; width: 11px; text-align: center; color: #fff; font-size: 8px; line-height: 10px; font-weight: 700; }
.cmd .glyph { top: 11px; left: 11px; font-size: 6px; }
.tray { margin-left: auto; display: flex; align-items: center; padding-right: 20px; border-right: 1px solid #bbb; margin-right: 4px; font-size: 13px; }
.deg { margin-left: 8px; }
.cond { margin: 0 16px 0 9px; }
.ti { width: 16px; height: 16px; margin-right: 8px; fill: none; stroke: #111; stroke-width: 1; }
.tray time { font-size: 12px; margin: 0 20px 0 4px; }
@media (max-width: 1100px) {
  .tabs { flex: 1; }
}
</style>
